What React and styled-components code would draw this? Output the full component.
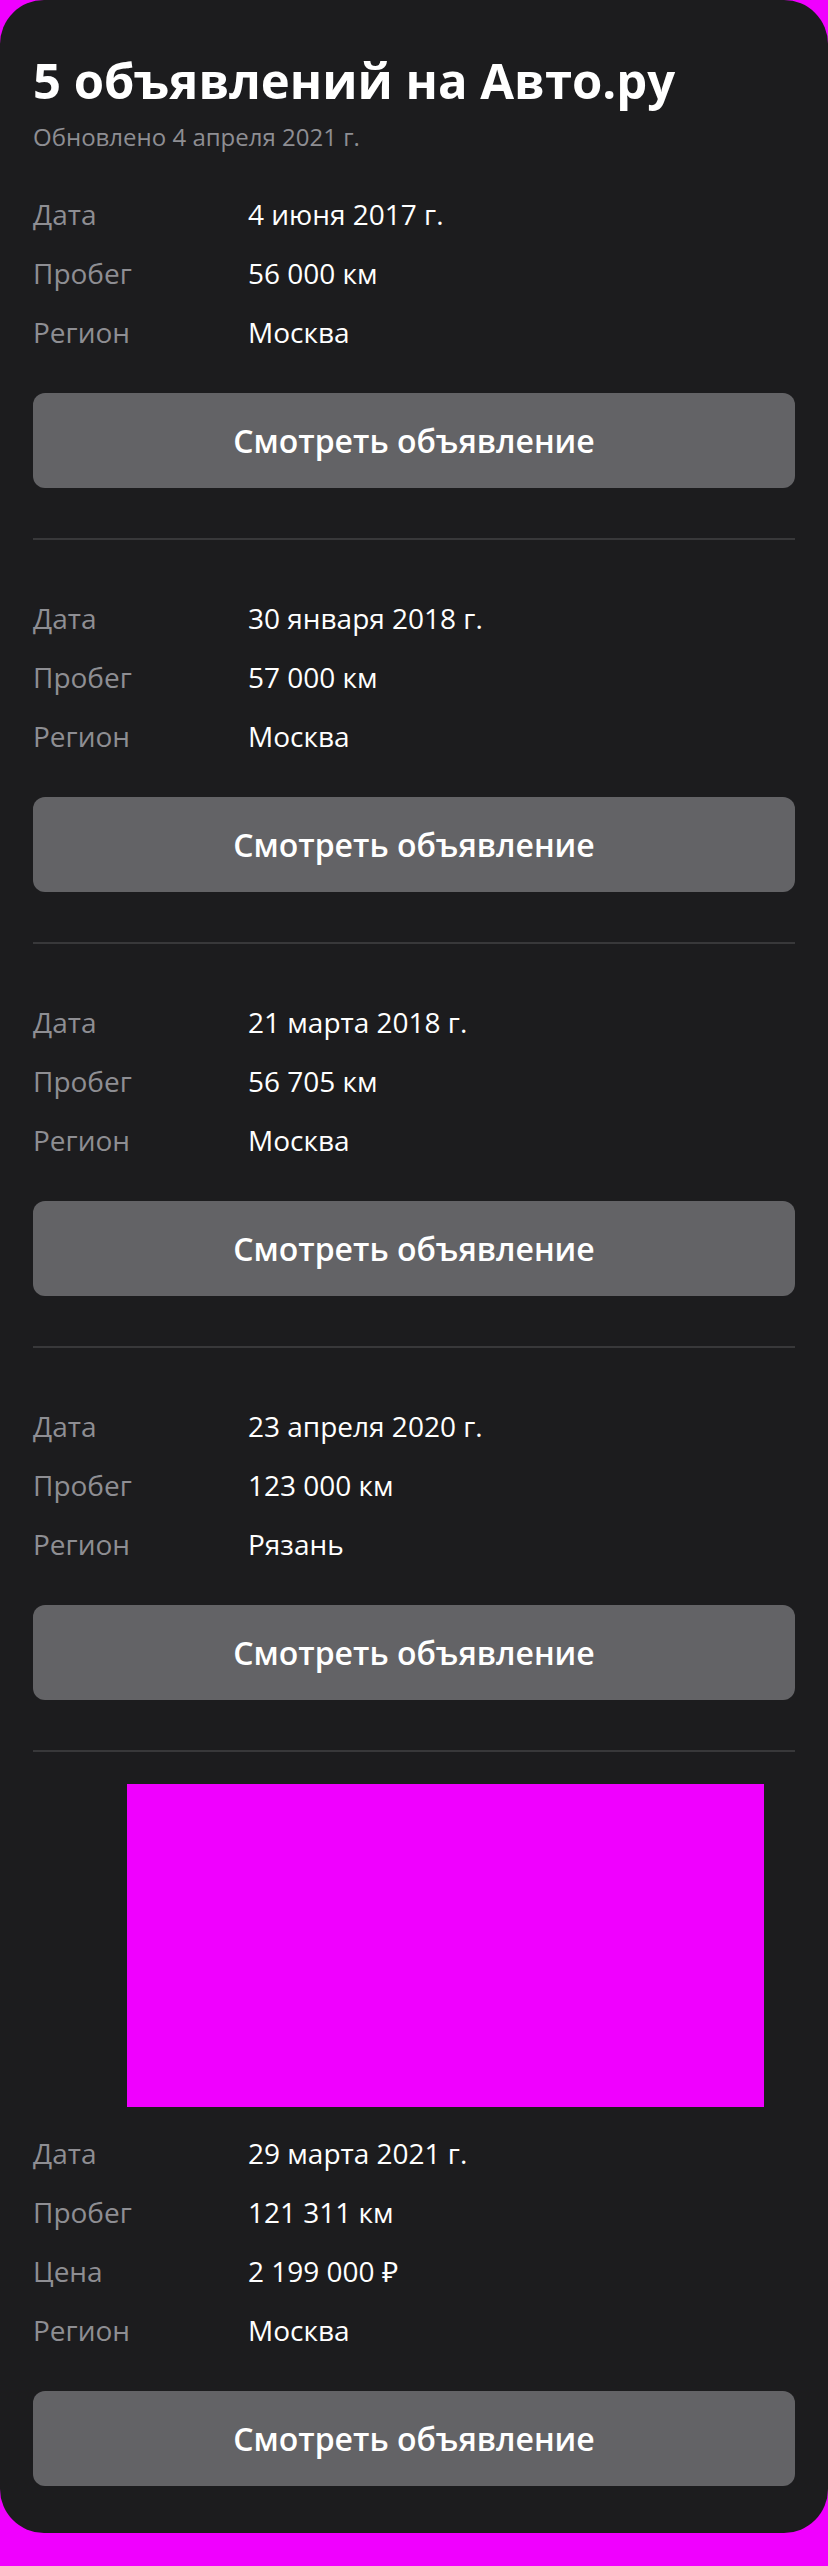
import React from 'react';
import styled, { createGlobalStyle } from 'styled-components';

const GlobalStyle = createGlobalStyle`
	html, body {
		margin: 0;
		padding: 0;
		background: #f000ff;
	}
	body {
		font-family: 'Open Sans', 'Noto Sans', sans-serif;
		-webkit-font-smoothing: antialiased;
	}
`;

const ads = [
	{ date: '4 июня 2017 г.', mileage: '56 000 км', region: 'Москва' },
	{ date: '30 января 2018 г.', mileage: '57 000 км', region: 'Москва' },
	{ date: '21 марта 2018 г.', mileage: '56 705 км', region: 'Москва' },
	{ date: '23 апреля 2020 г.', mileage: '123 000 км', region: 'Рязань' },
	{ date: '29 марта 2021 г.', mileage: '121 311 км', price: '2 199 000 ₽', region: 'Москва', photo: true },
];

function Ad({ ad, last }) {
	const rows = [
		['Дата', ad.date],
		['Пробег', ad.mileage],
		...(ad.price ? [['Цена', ad.price]] : []),
		['Регион', ad.region],
	];
	return (
		<Section $last={last}>
			{ad.photo && (
				<PhotoWrap>
					<Photo />
				</PhotoWrap>
			)}
			<Rows>
				{rows.map(([label, value]) => (
					<Row key={label}>
						<Label>{label}</Label>
						<Value>{value}</Value>
					</Row>
				))}
			</Rows>
			<Button type='button'>Смотреть объявление</Button>
		</Section>
	);
}

export default function App() {
	return (
		<>
			<GlobalStyle />
			<Card>
				<Header>
					<Title>5 объявлений на Авто.ру</Title>
					<Updated>Обновлено 4 апреля 2021 г.</Updated>
				</Header>
				{ads.map((ad, i) => (
					<Ad key={i} ad={ad} last={i === ads.length - 1} />
				))}
			</Card>
		</>
	);
}

const Card = styled.div`
	background: #1c1c1e;
	border-radius: 44px;
	padding: 0 33px;
	display: flex;
	flex-direction: column;
`;

const Header = styled.div`
	padding-top: 50px;
	padding-bottom: 32px;
	display: flex;
	flex-direction: column;
`;

const Title = styled.h1`
	margin: 0;
	color: #fff;
	font-size: 49px;
	font-weight: 700;
	line-height: 60px;
`;

const Updated = styled.div`
	margin-top: 12px;
	color: #8e8e93;
	font-size: 24px;
	line-height: 30px;
`;

const Section = styled.div`
	display: flex;
	flex-direction: column;
	padding-bottom: ${(p) => (p.$last ? '47px' : '50px')};
	& + & {
		border-top: 2px solid #38383a;
		padding-top: 48px;
	}
`;

const PhotoWrap = styled.div`
	display: flex;
	padding-left: 94px;
	margin-top: -16px;
	margin-bottom: 16px;
`;

const Photo = styled.div`
	width: 637px;
	height: 323px;
	background: #f000ff;
`;

const Rows = styled.div`
	display: flex;
	flex-direction: column;
`;

const Row = styled.div`
	display: grid;
	grid-template-columns: 215px 1fr;
	align-items: center;
	height: 59px;
	font-size: 28px;
`;

const Label = styled.span`
	color: #8e8e93;
`;

const Value = styled.span`
	color: #fff;
`;

const Button = styled.button`
	margin-top: 32px;
	height: 95px;
	border: none;
	border-radius: 12px;
	background: #636366;
	color: #fff;
	font-family: inherit;
	font-size: 32px;
	font-weight: 600;
	cursor: pointer;
`;
